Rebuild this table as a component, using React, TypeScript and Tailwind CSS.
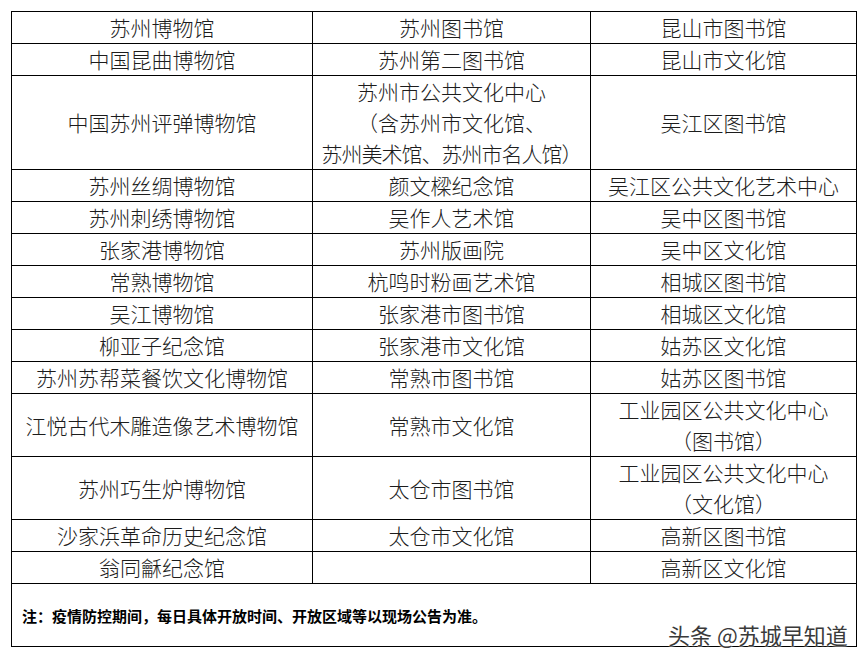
import React from "react";

type Row = { cells: string[][] };

// each cell is a list of lines
const rows: Row[] = [
  { cells: [["苏州博物馆"], ["苏州图书馆"], ["昆山市图书馆"]] },
  { cells: [["中国昆曲博物馆"], ["苏州第二图书馆"], ["昆山市文化馆"]] },
  {
    cells: [
      ["中国苏州评弹博物馆"],
      ["苏州市公共文化中心", "（含苏州市文化馆、", "苏州美术馆、苏州市名人馆）"],
      ["吴江区图书馆"],
    ],
  },
  { cells: [["苏州丝绸博物馆"], ["颜文樑纪念馆"], ["吴江区公共文化艺术中心"]] },
  { cells: [["苏州刺绣博物馆"], ["吴作人艺术馆"], ["吴中区图书馆"]] },
  { cells: [["张家港博物馆"], ["苏州版画院"], ["吴中区文化馆"]] },
  { cells: [["常熟博物馆"], ["杭鸣时粉画艺术馆"], ["相城区图书馆"]] },
  { cells: [["吴江博物馆"], ["张家港市图书馆"], ["相城区文化馆"]] },
  { cells: [["柳亚子纪念馆"], ["张家港市文化馆"], ["姑苏区文化馆"]] },
  { cells: [["苏州苏帮菜餐饮文化博物馆"], ["常熟市图书馆"], ["姑苏区图书馆"]] },
  {
    cells: [["江悦古代木雕造像艺术博物馆"], ["常熟市文化馆"], ["工业园区公共文化中心", "（图书馆）"]],
  },
  {
    cells: [["苏州巧生炉博物馆"], ["太仓市图书馆"], ["工业园区公共文化中心", "（文化馆）"]],
  },
  { cells: [["沙家浜革命历史纪念馆"], ["太仓市文化馆"], ["高新区图书馆"]] },
  { cells: [["翁同龢纪念馆"], [""], ["高新区文化馆"]] },
];

export default function App() {
  return (
    <div className="relative w-[868px] h-[665px] bg-white pt-[11px] pl-[11px] font-['Noto_Sans_CJK_SC',sans-serif] text-[#1c1c1c]">
      <table className="table-fixed border-collapse w-[845px]">
        <colgroup>
          <col className="w-[301px]" />
          <col className="w-[278px]" />
          <col className="w-[266px]" />
        </colgroup>
        <tbody>
          {rows.map((row, i) => (
            <tr key={i}>
              {row.cells.map((lines, j) => (
                <td
                  key={j}
                  className="border border-black p-0 text-center align-middle text-[21px] leading-[31px] font-light whitespace-nowrap"
                >
                  {lines.map((l, k) => (
                    <div key={k} className={l.includes("名人馆") ? "tracking-[-1px]" : ""}>
                      {l || "\u00a0"}
                    </div>
                  ))}
                </td>
              ))}
            </tr>
          ))}
          <tr>
            <td
              colSpan={3}
              className="border border-black h-[63px] pl-[10px] pt-[2px] text-left align-middle text-[15px] font-bold leading-[20px] text-black"
            >
              注：疫情防控期间，每日具体开放时间、开放区域等以现场公告为准。
            </td>
          </tr>
        </tbody>
      </table>

      {/* watermark */}
      <div className="absolute left-[668px] top-[620px] text-[22px] leading-[28px] text-[#3a3a3a] [text-shadow:0_0_2px_#fff,0_0_2px_#fff] whitespace-nowrap">
        头条 @苏城早知道
      </div>
    </div>
  );
}
